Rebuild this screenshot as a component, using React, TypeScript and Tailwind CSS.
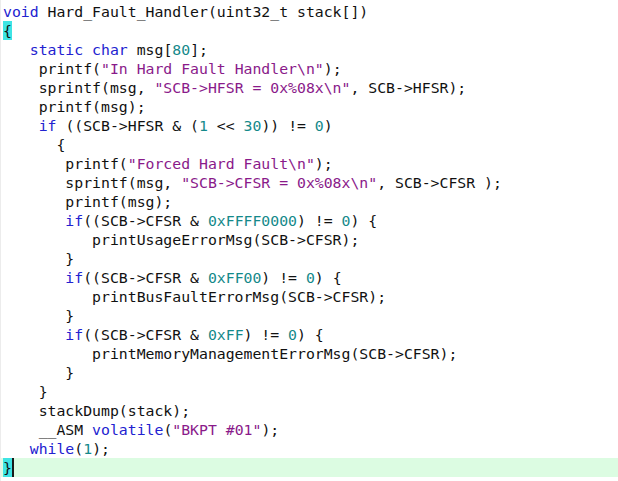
type Tok = [string, string?];

// k = keyword, s = string, n = number, default = plain
const lines: Tok[][] = [
  [["void", "k"], [" Hard_Fault_Handler(uint32_t stack[])"]],
  [["{", "brace"]],
  [["   "], ["static", "k"], [" "], ["char", "k"], [" msg["], ["80", "n"], ["];"]],
  [["    printf("], ['"In Hard Fault Handler\\n"', "s"], [");"]],
  [["    sprintf(msg, "], ['"SCB->HFSR = 0x%08x\\n"', "s"], [", SCB->HFSR);"]],
  [["    printf(msg);"]],
  [["    "], ["if", "k"], [" ((SCB->HFSR & ("], ["1", "n"], [" << "], ["30", "n"], [")) != "], ["0", "n"], [")"]],
  [["      {"]],
  [["       printf("], ['"Forced Hard Fault\\n"', "s"], [");"]],
  [["       sprintf(msg, "], ['"SCB->CFSR = 0x%08x\\n"', "s"], [", SCB->CFSR );"]],
  [["       printf(msg);"]],
  [["       "], ["if", "k"], ["((SCB->CFSR & "], ["0xFFFF0000", "n"], [") != "], ["0", "n"], [") {"]],
  [["          printUsageErrorMsg(SCB->CFSR);"]],
  [["       }"]],
  [["       "], ["if", "k"], ["((SCB->CFSR & "], ["0xFF00", "n"], [") != "], ["0", "n"], [") {"]],
  [["          printBusFaultErrorMsg(SCB->CFSR);"]],
  [["       }"]],
  [["       "], ["if", "k"], ["((SCB->CFSR & "], ["0xFF", "n"], [") != "], ["0", "n"], [") {"]],
  [["          printMemoryManagementErrorMsg(SCB->CFSR);"]],
  [["       }"]],
  [["    }"]],
  [["    stackDump(stack);"]],
  [["    __ASM "], ["volatile", "k"], ["("], ['"BKPT #01"', "s"], [");"]],
  [["   "], ["while", "k"], ["("], ["1", "n"], [");"]],
  [["}", "cursor"]],
];

function Token({ text, kind }: { text: string; kind?: string }) {
  if (kind === "k") return <span className="text-[#2222d0]">{text}</span>;
  if (kind === "s") return <span className="text-[#8a1a8a]">{text}</span>;
  if (kind === "n") return <span className="text-[#14898a]">{text}</span>;
  if (kind === "brace")
    return <span className="inline-block h-[19px] bg-[#3ee4e4]">{text}</span>;
  if (kind === "cursor")
    return (
      <span className="inline-block h-[19px] bg-[#3ee4e4] border-r-2 border-[#1a1a1a]">
        {text}
      </span>
    );
  return <span>{text}</span>;
}

export default function App() {
  return (
    <div className="w-[618px] h-[481px] bg-white overflow-hidden border-l border-[#ececec]">
      <div
        className="pt-[2px] text-[14.8px] leading-[19px] text-[#111] whitespace-pre"
        style={{ fontFamily: '"DejaVu Sans Mono", "Liberation Mono", monospace' }}
      >
        {lines.map((line, i) => (
          <div
            key={i}
            className={
              i === lines.length - 1
                ? "h-[19px] pl-[2px] bg-[#dcfce2]"
                : "h-[19px] pl-[2px]"
            }
          >
            {line.map(([text, kind], j) => (
              <Token key={j} text={text} kind={kind} />
            ))}
          </div>
        ))}
      </div>
    </div>
  );
}
